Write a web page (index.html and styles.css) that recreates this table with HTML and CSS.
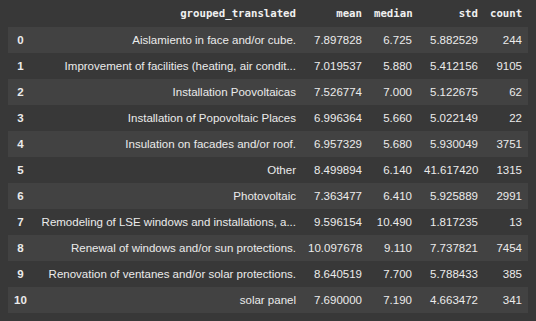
FILE: index.html
```html
<!DOCTYPE html>
<html lang="en">
<head>
  <meta charset="UTF-8">
  <title>grouped_translated</title>
  <link rel="stylesheet" href="styles.css">
</head>
<body>
  <table class="dataframe">
    <colgroup>
      <col class="col-index">
      <col class="col-name">
      <col class="col-mean">
      <col class="col-median">
      <col class="col-std">
      <col class="col-count">
    </colgroup>
    <thead>
      <tr>
        <th></th>
        <th>grouped_translated</th>
        <th>mean</th>
        <th>median</th>
        <th>std</th>
        <th>count</th>
      </tr>
    </thead>
    <tbody>
      <tr><th>0</th><td>Aislamiento in face and/or cube.</td><td>7.897828</td><td>6.725</td><td>5.882529</td><td>244</td></tr>
      <tr><th>1</th><td>Improvement of facilities (heating, air condit...</td><td>7.019537</td><td>5.880</td><td>5.412156</td><td>9105</td></tr>
      <tr><th>2</th><td>Installation Poovoltaicas</td><td>7.526774</td><td>7.000</td><td>5.122675</td><td>62</td></tr>
      <tr><th>3</th><td>Installation of Popovoltaic Places</td><td>6.996364</td><td>5.660</td><td>5.022149</td><td>22</td></tr>
      <tr><th>4</th><td>Insulation on facades and/or roof.</td><td>6.957329</td><td>5.680</td><td>5.930049</td><td>3751</td></tr>
      <tr><th>5</th><td>Other</td><td>8.499894</td><td>6.140</td><td>41.617420</td><td>1315</td></tr>
      <tr><th>6</th><td>Photovoltaic</td><td>7.363477</td><td>6.410</td><td>5.925889</td><td>2991</td></tr>
      <tr><th>7</th><td>Remodeling of LSE windows and installations, a...</td><td>9.596154</td><td>10.490</td><td>1.817235</td><td>13</td></tr>
      <tr><th>8</th><td>Renewal of windows and/or sun protections.</td><td>10.097678</td><td>9.110</td><td>7.737821</td><td>7454</td></tr>
      <tr><th>9</th><td>Renovation of ventanes and/or solar protections.</td><td>8.640519</td><td>7.700</td><td>5.788433</td><td>385</td></tr>
      <tr><th>10</th><td>solar panel</td><td>7.690000</td><td>7.190</td><td>4.663472</td><td>341</td></tr>
    </tbody>
  </table>
</body>
</html>
```

FILE: styles.css
```css
body {
  margin: 0;
  background-color: #383838;
  color: #ebebeb;
  font-family: "Liberation Sans", Arial, sans-serif;
}

.dataframe {
  margin-left: 8px;
  width: 520px;
  border-collapse: collapse;
  table-layout: fixed;
  font-size: 11.5px;
}

.col-index { width: 25px; }
.col-name { width: 269px; }
.col-mean { width: 66px; }
.col-median { width: 50px; }
.col-std { width: 66px; }
.col-count { width: 44px; }

.dataframe th,
.dataframe td {
  padding: 0 6px;
  text-align: right;
  white-space: nowrap;
}

.dataframe thead tr {
  height: 27px;
}

.dataframe thead th {
  font-family: "DejaVu Sans Mono", monospace;
  font-size: 10.7px;
  font-weight: bold;
  color: #f0f0f0;
}

.dataframe tbody tr {
  height: 26px;
}

.dataframe tbody tr:nth-child(odd) {
  background-color: #424242;
}

.dataframe tbody th {
  text-align: center;
  padding: 0;
  font-weight: bold;
}
```
